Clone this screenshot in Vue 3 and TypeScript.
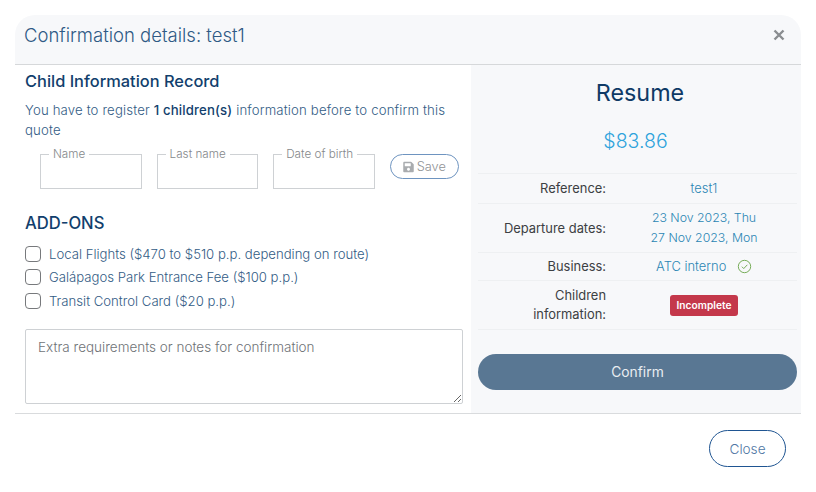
<script setup lang="ts">
interface InfoRow {
  label: string
  values: string[]
  kind?: 'verified' | 'badge' | 'dates'
}

const fields = ['Name', 'Last name', 'Date of birth']

const addons = [
  'Local Flights ($470 to $510 p.p. depending on route)',
  'Galápagos Park Entrance Fee ($100 p.p.)',
  'Transit Control Card ($20 p.p.)',
]

const rows: InfoRow[] = [
  { label: 'Reference:', values: ['test1'] },
  { label: 'Departure dates:', values: ['23 Nov 2023, Thu', '27 Nov 2023, Mon'], kind: 'dates' },
  { label: 'Business:', values: ['ATC interno'], kind: 'verified' },
  { label: 'Children information:', values: ['Incomplete'], kind: 'badge' },
]
</script>

<template>
  <div class="page">
    <div class="modal">
      <header class="modal-header">
        <h1>Confirmation details: test1</h1>
        <svg class="close-x" viewBox="0 0 12 12" aria-label="Close">
          <path d="M1.5 1.5l9 9M10.5 1.5l-9 9" />
        </svg>
      </header>

      <div class="modal-body">
        <section class="left">
          <h2>Child Information Record</h2>
          <p class="intro">
            <span>You have to register</span> <b>1 children(s)</b>
            <span> information before to confirm this</span> <span>quote</span>
          </p>

          <div class="child-form">
            <fieldset v-for="f in fields" :key="f" class="field">
              <legend>{{ f }}</legend>
            </fieldset>
            <button class="save" type="button">
              <svg viewBox="0 0 448 512" width="11" height="12">
                <path d="M433.900 129.900l-83.900-83.900A48 48 0 0 0 316.100 32H48C21.500 32 0 53.500 0 80v352c0 26.500 21.500 48 48 48h352c26.500 0 48-21.500 48-48V163.900a48 48 0 0 0-14.100-34zM224 416c-35.300 0-64-28.700-64-64s28.700-64 64-64 64 28.700 64 64-28.700 64-64 64zm96-304.500V212c0 6.600-5.400 12-12 12H76c-6.600 0-12-5.400-12-12V108c0-6.600 5.400-12 12-12h228.500c3.200 0 6.200 1.300 8.500 3.500l3.500 3.500c2.200 2.300 3.500 5.300 3.500 8.500z" />
              </svg>
              Save
            </button>
          </div>

          <h3>ADD-ONS</h3>
          <label v-for="a in addons" :key="a" class="addon">
            <input type="checkbox" />
            <span>{{ a }}</span>
          </label>

          <textarea placeholder="Extra requirements or notes for confirmation"></textarea>
        </section>

        <aside class="right">
          <h2 class="resume">Resume</h2>
          <div class="price">$83.86</div>
          <div class="table">
            <div v-for="r in rows" :key="r.label" class="row">
              <div class="label">{{ r.label }}</div>
              <div class="value" :class="{ dates: r.kind === 'dates' }">
                <span v-if="r.kind === 'badge'" class="badge">{{ r.values[0] }}</span>
                <template v-else>
                  <div v-for="v in r.values" :key="v">
                    {{ v }}
                    <svg v-if="r.kind === 'verified'" class="check" viewBox="0 0 16 16">
                      <circle cx="8" cy="8" r="6.6" />
                      <path d="M5.200 8.200l2 2 3.800-4" />
                    </svg>
                  </div>
                </template>
              </div>
            </div>
          </div>
          <button class="confirm" type="button">Confirm</button>
        </aside>
      </div>

      <footer class="modal-footer">
        <button class="close-btn" type="button">Close</button>
      </footer>
    </div>
  </div>
</template>

<style>
html,
body {
  background: #fff;
}
</style>

<style scoped>
.page {
  padding: 15px;
  font-family: Inter, "Open Sans", sans-serif;
  color: #335c85;
}

.modal {
  box-sizing: border-box;
  height: 462px;
  background: #fff;
  border-radius: 20px;
}

.modal-header {
  box-sizing: border-box;
  height: 50px;
  display: flex;
  align-items: center;
  justify-content: space-between;
  padding: 0 16px 9px 9px;
  background: #f7f8fa;
  border-bottom: 1px solid #d6d8da;
  border-radius: 20px 20px 0 0;
}

.modal-header h1 {
  margin: 0;
  font-size: 18.500px;
  font-weight: 300;
  color: #2f5a85;
}

.close-x {
  width: 12px;
  height: 12px;
  margin-top: -1px;
  fill: none;
  stroke: #8a8d90;
  stroke-width: 2.400;
}

.modal-body {
  display: flex;
  height: 348px;
  border-bottom: 1px solid #d9dbdd;
}

.left {
  box-sizing: border-box;
  width: 456px;
  padding: 6px 8px 0 10px;
}

.left h2 {
  margin: 0;
  font-size: 16.400px;
  line-height: 20px;
  font-weight: 500;
  color: #123f6d;
}

.intro {
  margin: 9px 0 0;
  font-size: 13.200px;
  line-height: 20px;
  letter-spacing: 0.150px;
  font-weight: 300;
  color: #335c85;
}

.intro b {
  font-weight: 500;
  color: #123f6d;
}

.child-form {
  display: flex;
  align-items: flex-start;
  gap: 15px;
  margin: 14px 0 0 15px;
}

.field {
  box-sizing: border-box;
  width: 101.600px;
  height: 41px;
  margin: -6px 0 0;
  padding: 0 0 0 8px;
  border: 1px solid #ced1d4;
}

.field legend {
  padding: 0 4px;
  font-size: 11.700px;
  line-height: 12px;
  font-weight: 300;
  color: #85888b;
}

.save {
  box-sizing: border-box;
  width: 69px;
  height: 25px;
  display: flex;
  align-items: center;
  justify-content: center;
  gap: 3px;
  padding: 0;
  background: #fff;
  border: 1px solid #6e94c0;
  border-radius: 13px;
  font: 300 12.800px Inter, sans-serif;
  color: #8f9295;
}

.save svg {
  fill: #a9acaf;
}

.left h3 {
  margin: 23px 0 8px;
  font-size: 16.600px;
  line-height: 22px;
  font-weight: 500;
  color: #123f6d;
}

.addon {
  display: flex;
  align-items: center;
  gap: 8px;
  height: 23.500px;
  font-size: 13.150px;
  font-weight: 300;
  color: #335c85;
}

.addon input {
  appearance: none;
  flex: none;
  box-sizing: border-box;
  width: 16px;
  height: 16px;
  margin: 0;
  background: #fff;
  border: 1px solid #77797c;
  border-radius: 4px;
}

textarea {
  display: block;
  box-sizing: border-box;
  width: 438px;
  height: 75px;
  margin-top: 16px;
  padding: 9px 12px;
  border: 1px solid #ced1d4;
  border-radius: 2px;
  font: 300 13.500px Inter, sans-serif;
  outline: none;
}

textarea::placeholder {
  color: #6f7377;
}

.right {
  box-sizing: border-box;
  width: 330px;
  padding: 0 4px 0 7px;
  background: #f7f8fa;
}

.resume {
  margin: 13px 0 0;
  padding-left: 5px;
  text-align: center;
  font-size: 23.300px;
  line-height: 30px;
  font-weight: 400;
  color: #0f3a66;
}

.price {
  margin-top: 20px;
  padding-right: 4px;
  text-align: center;
  font-size: 19.500px;
  line-height: 26px;
  font-weight: 300;
  color: #2ea3dc;
}

.table {
  display: grid;
  grid-template-rows: 30px 49px 28px 49px;
  margin-top: 19px;
  border-top: 1px solid #eef0f2;
}

.row {
  box-sizing: border-box;
  display: flex;
  align-items: center;
  border-bottom: 1px solid #eef0f2;
  font-size: 12.900px;
  line-height: 20px;
}

.label {
  box-sizing: border-box;
  width: 128px;
  padding-left: 20px;
  text-align: right;
  line-height: 19px;
  color: #3c4043;
}

.value {
  flex: 1;
  padding-left: 5px;
  text-align: center;
  font-weight: 300;
  color: #2b86b4;
}

.value.dates {
  font-size: 12.300px;
}

.check {
  width: 15px;
  height: 15px;
  margin-left: 7px;
  vertical-align: -3px;
  fill: none;
  stroke: #6fa84f;
  stroke-width: 1;
}

.badge {
  display: inline-block;
  box-sizing: border-box;
  width: 68px;
  background: #c4384b;
  border-radius: 3px;
  font-size: 10.200px;
  line-height: 21px;
  font-weight: 600;
  color: #fff;
}

.confirm {
  display: block;
  width: 100%;
  height: 36px;
  margin-top: 24px;
  border: 0;
  border-radius: 18px;
  background: #597793;
  font: 13.800px Inter, sans-serif;
  color: #e9edf1;
}

.modal-footer {
  display: flex;
  justify-content: flex-end;
  padding: 16px 15px 0 0;
}

.close-btn {
  box-sizing: border-box;
  width: 77px;
  height: 37px;
  background: #fff;
  border: 1px solid #1f5592;
  border-radius: 19px;
  font: 300 13.600px Inter, sans-serif;
  color: #4f76a3;
}
</style>
